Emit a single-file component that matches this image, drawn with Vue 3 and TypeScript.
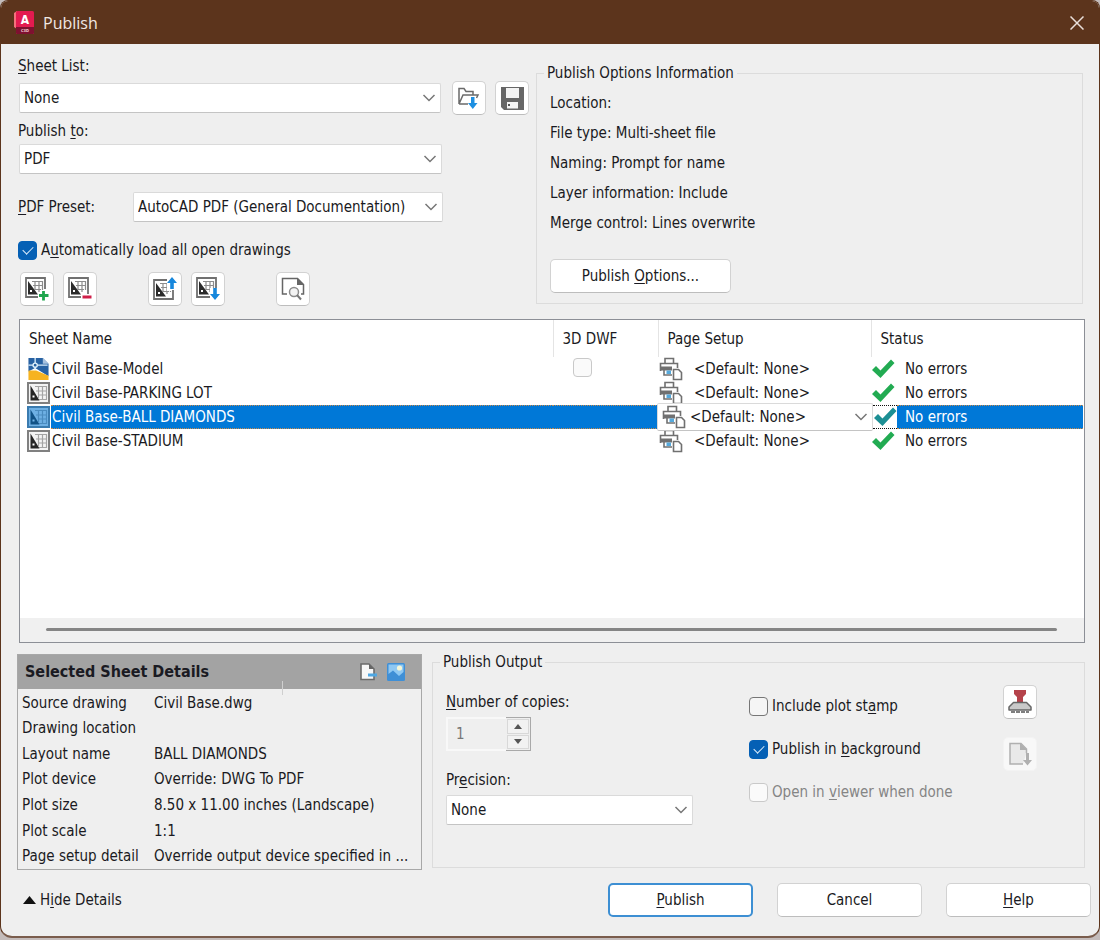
<script setup lang="ts">
import { ref } from 'vue'

interface Sheet {
  name: string
  kind: 'model' | 'layout'
}

interface Detail {
  label: string
  value: string
}

const sheets: Sheet[] = [
  { name: 'Civil Base-Model', kind: 'model' },
  { name: 'Civil Base-PARKING LOT', kind: 'layout' },
  { name: 'Civil Base-BALL DIAMONDS', kind: 'layout' },
  { name: 'Civil Base-STADIUM', kind: 'layout' },
]

const details: Detail[] = [
  { label: 'Source drawing', value: 'Civil Base.dwg' },
  { label: 'Drawing location', value: '' },
  { label: 'Layout name', value: 'BALL DIAMONDS' },
  { label: 'Plot device', value: 'Override: DWG To PDF' },
  { label: 'Plot size', value: '8.50 x 11.00 inches (Landscape)' },
  { label: 'Plot scale', value: '1:1' },
  { label: 'Page setup detail', value: 'Override output device specified in ...' },
]

const options: string[] = [
  'Location:',
  'File type: Multi-sheet file',
  'Naming: Prompt for name',
  'Layer information: Include',
  'Merge control: Lines overwrite',
]

const selected = ref(2)
const autoLoad = ref(true)
const plotStamp = ref(false)
const background = ref(true)
const copies = ref(1)
</script>

<template>
  <div class="desktop">
    <svg class="defs" aria-hidden="true">
      <symbol id="sheet" viewBox="0 0 23 22">
        <rect x="1" y="1" width="21" height="20" fill="#f4f4f4" stroke="#808080" stroke-width="2" />
        <path d="M8 4.500H19.500V17.500H12M9 9H19.500M11 13H19.500M11.500 4V16M15.500 4V18" fill="none" stroke="#a4a4a4" stroke-width="1.200" />
        <path d="M3.500 3.500V18.500H12.500Z" fill="#262626" />
        <rect x="5.500" y="13.500" width="2" height="2" fill="#fff" />
      </symbol>
      <symbol id="model" viewBox="0 0 21 23">
        <path d="M0 0H15L21 6V19L7 10.500L0 14Z" fill="#2862a3" />
        <path d="M15 0L21 6H15Z" fill="#a9c3df" />
        <path d="M0 13H8L21 18.500V23H0Z" fill="#f6b320" />
        <path d="M7 0V12M0 7.500H20" stroke="#d8ecfa" stroke-width="1.400" />
        <circle cx="7" cy="7.500" r="2.200" fill="#2862a3" stroke="#e4f3fc" stroke-width="1.400" />
      </symbol>
      <symbol id="printer" viewBox="0 0 24 24">
        <path d="M6 6V1.500H14.500V6" fill="#fff" stroke="#707070" stroke-width="1.600" />
        <path d="M1.500 14V6.500H18.500V11" fill="none" stroke="#707070" stroke-width="1.600" />
        <path d="M1 9.500H13V13.500H1Z" fill="#707070" />
        <path d="M5 13V18H13" fill="none" stroke="#707070" stroke-width="1.600" />
        <path d="M7.500 13.500H12V17H7.500Z" fill="#55a9dc" />
        <path d="M14.500 12.500H19.500L22.500 15.500V22.500H14.500Z" fill="#fff" stroke="#707070" stroke-width="1.600" />
      </symbol>
      <symbol id="chevron" viewBox="0 0 14 8">
        <path d="M1.500 1L7 6.500L12.500 1" fill="none" stroke="#777" stroke-width="1.500" />
      </symbol>
      <symbol id="mini" viewBox="0 0 22 22">
        <path d="M14 20H1V1H20V12" fill="none" stroke="#707070" stroke-width="1.800" />
        <path d="M7 4.500H17.500V13M8 8.500H17.500M10 12.500H16M10 4.500V13M14 4.500V15" fill="none" stroke="#8c8c8c" stroke-width="1.200" />
        <path d="M3 4V17.500H13Z" fill="#2b2b2b" />
        <rect x="5" y="13" width="2" height="2" fill="#fff" />
      </symbol>
    </svg>

    <main class="dialog">
      <header class="titlebar">
        <svg class="logo" viewBox="0 0 20 23" aria-hidden="true">
          <path d="M0 2L3 0V18L0 16Z" fill="#f3727d" />
          <rect x="2" y="0" width="18" height="23" rx="1.500" fill="#e31b50" />
          <path d="M2 16H20V21.500Q20 23 18.500 23H3.500Q2 23 2 21.500Z" fill="#7e1130" />
          <text x="11" y="13" text-anchor="middle" font-size="12" font-weight="700" fill="#fff">A</text>
          <text x="11" y="21" text-anchor="middle" font-size="4" font-weight="700" fill="#f4ccd6">C3D</text>
        </svg>
        <h1>Publish</h1>
        <button class="close" type="button" aria-label="Close">
          <svg viewBox="0 0 14 14"><path d="M.5.500L13.500 13.500M13.500.500L.5 13.500" stroke="#e9dfd9" stroke-width="1.500" /></svg>
        </button>
      </header>

      <div class="body">
        <section class="top">
          <div class="source">
            <label class="lbl" for="sheet-list"><u>S</u>heet List:</label>
            <div class="row first">
              <div class="combo grow">
                <select id="sheet-list"><option>None</option></select>
                <svg class="chev"><use href="#chevron" /></svg>
              </div>
              <button class="tool" type="button" aria-label="Load sheet list">
                <svg viewBox="0 0 24 24">
                  <path d="M2 18V2.500H7L9 5.500H16V8.500M2 18L6 9H21L19.500 12M2 18H11" fill="none" stroke="#6a6a6a" stroke-width="1.500" />
                  <path d="M14 11H17.500V17H20.500L15.800 23L11 17H14Z" fill="#1d8fe1" />
                </svg>
              </button>
              <button class="tool" type="button" aria-label="Save sheet list">
                <svg viewBox="0 0 24 24">
                  <path d="M1 1H24V24H4L1 21Z" fill="#666" />
                  <path d="M6 2H19V12H6ZM7 16H18V22.500H7Z" fill="#f3f3f3" />
                  <path d="M8 18H10V20H8Z" fill="#555" />
                </svg>
              </button>
            </div>
            <label class="lbl" for="publish-to">Publish <u>t</u>o:</label>
            <div class="row second">
              <div class="combo grow">
                <select id="publish-to"><option>PDF</option></select>
                <svg class="chev"><use href="#chevron" /></svg>
              </div>
            </div>
            <div class="row preset">
              <label for="preset"><u>P</u>DF Preset:</label>
              <div class="combo grow">
                <select id="preset"><option>AutoCAD PDF (General Documentation)</option></select>
                <svg class="chev"><use href="#chevron" /></svg>
              </div>
            </div>
            <label class="check"><input v-model="autoLoad" type="checkbox" /><span>A<u>u</u>tomatically load all open drawings</span></label>
            <div class="toolbar">
              <button class="tool" type="button" aria-label="Add sheets">
                <svg viewBox="0 0 24 24"><use href="#mini" width="22" height="22" /><path d="M18.500 13V24M13 18.500H24" stroke="#fff" stroke-width="5" /><path d="M18.500 14V23.500M14 18.500H23.500" stroke="#1fa64d" stroke-width="2.800" /></svg>
              </button>
              <button class="tool" type="button" aria-label="Remove sheets">
                <svg viewBox="0 0 24 24"><use href="#mini" width="22" height="22" /><path d="M13 20H24" stroke="#fff" stroke-width="5" /><path d="M20 12V17" stroke="#707070" stroke-width="1.800" /><path d="M14.500 20H23.500" stroke="#cf1e48" stroke-width="3" /></svg>
              </button>
              <button class="tool gap" type="button" aria-label="Move sheet up">
                <svg viewBox="0 0 24 24"><use href="#mini" y="2" width="22" height="22" /><path d="M14 0H24V14H14Z" fill="#fff" /><path d="M20 13V22H13" fill="none" stroke="#707070" stroke-width="1.800" /><path d="M19 0L24 6H20.800V12H17.200V6H14Z" fill="#1687dc" /></svg>
              </button>
              <button class="tool" type="button" aria-label="Move sheet down">
                <svg viewBox="0 0 24 24"><use href="#mini" width="22" height="22" /><path d="M14 11H24V24H14Z" fill="#fff" /><path d="M17.200 11H20.800V17H24L19 23L14 17H17.200Z" fill="#1687dc" /></svg>
              </button>
              <button class="tool gap" type="button" aria-label="Preview">
                <svg viewBox="0 0 24 24"><path d="M6 17H1.500V1.500H16.500L22.500 7.500V17H20" fill="none" stroke="#666" stroke-width="1.500" /><path d="M16 1V8H23Z" fill="#666" /><circle cx="13" cy="15" r="4.500" fill="#f3f3f3" stroke="#8b8b8b" stroke-width="1.500" /><path d="M16 18L20 22.500" stroke="#777" stroke-width="2" /></svg>
              </button>
            </div>
          </div>

          <fieldset class="info">
            <legend>Publish Options Information</legend>
            <p v-for="line in options" :key="line">{{ line }}</p>
            <button class="btn options" type="button">Publish <u>O</u>ptions...</button>
          </fieldset>
        </section>

        <section class="list">
          <table>
            <colgroup><col /><col class="c-dwf" /><col class="c-page" /><col class="c-status" /></colgroup>
            <thead>
              <tr><th>Sheet Name</th><th>3D DWF</th><th>Page Setup</th><th>Status</th></tr>
            </thead>
            <tbody>
              <tr v-for="(s, i) in sheets" :key="s.name" :class="{ sel: i === selected }" @click="selected = i">
                <td>
                  <div class="cell">
                    <svg class="kind"><use :href="s.kind === 'model' ? '#model' : '#sheet'" /></svg>
                    <span class="hl">{{ s.name }}</span>
                  </div>
                </td>
                <td class="dwf">
                  <div class="cell hl"><input v-if="s.kind === 'model'" type="checkbox" disabled aria-label="3D DWF" /></div>
                </td>
                <td class="page">
                  <div v-if="i === selected" class="combo inline">
                    <select aria-label="Page setup"><option>&lt;Default: None&gt;</option></select>
                    <svg class="printer"><use href="#printer" /></svg>
                    <svg class="chev"><use href="#chevron" /></svg>
                  </div>
                  <div v-else class="cell">
                    <svg class="printer"><use href="#printer" /></svg>
                    <span>&lt;Default: None&gt;</span>
                  </div>
                </td>
                <td class="status">
                  <div class="cell">
                    <span class="tick"><svg viewBox="0 0 23 20"><path d="M0 11L4 7L8.500 11.500L19 0.500L22.500 4L8.500 19Z" /></svg></span>
                    <span class="hl">No errors</span>
                  </div>
                </td>
              </tr>
            </tbody>
          </table>
          <div class="scroll"><div class="thumb"></div></div>
        </section>

        <section class="bottom">
          <div class="details">
            <header>
              <h2>Selected Sheet Details</h2>
              <svg viewBox="0 0 18 18"><path d="M2 1H10L15 6V16.500H2Z" fill="#f7f7f7" stroke="#6b6b6b" stroke-width="1.600" /><path d="M10 1V6H15Z" fill="#666" /><path d="M9 12H18" stroke="#4fa7e2" stroke-width="3" /></svg>
              <svg viewBox="0 0 18 18"><rect width="18" height="18" rx="1.500" fill="#3f8fd6" /><path d="M1.500 1.500H16.500V9L12 13L6 7.500L1.500 11Z" fill="#8fc8f2" /><circle cx="12.500" cy="5" r="2.600" fill="#f4f6d8" /></svg>
              <i class="grip"></i>
            </header>
            <dl>
              <div v-for="d in details" :key="d.label"><dt>{{ d.label }}</dt><dd>{{ d.value }}</dd></div>
            </dl>
          </div>

          <fieldset class="output">
            <legend>Publish Output</legend>
            <div class="left">
              <label for="copies"><u>N</u>umber of copies:</label>
              <div class="spin">
                <input id="copies" v-model="copies" type="text" disabled />
                <div class="arrows">
                  <button type="button" disabled aria-label="Increase"><svg viewBox="0 0 8 5"><path d="M0 5L4 0L8 5Z" /></svg></button>
                  <button type="button" disabled aria-label="Decrease"><svg viewBox="0 0 8 5"><path d="M0 0L4 5L8 0Z" /></svg></button>
                </div>
              </div>
              <label for="precision">Pr<u>e</u>cision:</label>
              <div class="combo">
                <select id="precision"><option>None</option></select>
                <svg class="chev"><use href="#chevron" /></svg>
              </div>
            </div>
            <div class="right">
              <div class="checks">
                <label class="check"><input v-model="plotStamp" type="checkbox" /><span>Include plot st<u>a</u>mp</span></label>
                <label class="check"><input v-model="background" type="checkbox" /><span>Publish in <u>b</u>ackground</span></label>
                <label class="check dim"><input type="checkbox" disabled /><span>Open in <u>v</u>iewer when done</span></label>
              </div>
              <div class="side">
                <button class="tool" type="button" aria-label="Plot stamp settings">
                  <svg viewBox="0 0 24 24"><path d="M6 0H18V4L15 7V12H9V7L6 4Z" fill="#b5434b" /><path d="M5.500 12.500H18.500L23 17V20H1V17Z" fill="#c9c9c9" stroke="#666" stroke-width="1.500" stroke-linejoin="round" /><path d="M3 22H21" stroke="#555" stroke-width="1.500" stroke-dasharray="4 1" /></svg>
                </button>
                <button class="tool off" type="button" disabled aria-label="View published file">
                  <svg viewBox="0 0 24 24"><path d="M15 22H2V1.500H13L18.500 7V11" fill="#e9e9e9" stroke="#b0b0b0" stroke-width="1.500" /><path d="M12 1V8H19Z" fill="#b0b0b0" /><path d="M18 11H21V18H24L19.500 23.500L15 18H18Z" fill="#b0b0b0" /></svg>
                </button>
              </div>
            </div>
          </fieldset>
        </section>

        <footer>
          <button class="hide" type="button"><svg viewBox="0 0 13 8"><path d="M0 8L6.500 0L13 8Z" fill="#111" /></svg><span>H<u>i</u>de Details</span></button>
          <button class="btn primary" type="button"><u>P</u>ublish</button>
          <button class="btn" type="button">Cancel</button>
          <button class="btn" type="button"><u>H</u>elp</button>
        </footer>
      </div>
    </main>
  </div>
</template>

<style>
body {
  background: #c4bcbb;
}
</style>

<style scoped>
* {
  box-sizing: border-box;
}
.desktop {
  font-family: "DejaVu Sans Condensed", "Noto Sans", sans-serif;
  font-size: 15px;
  line-height: 20px;
  color: #1a1a22;
  min-height: 100vh;
  padding-bottom: 2px;
  display: flex;
}
.defs {
  position: absolute;
  width: 0;
  height: 0;
}
button,
select,
input {
  font: inherit;
  color: inherit;
  margin: 0;
}
u {
  text-underline-offset: 2px;
}
.dialog {
  flex: 1;
  min-width: 0;
  display: flex;
  flex-direction: column;
  background: #efefef;
  border: 1px solid #5c341c;
  border-bottom: 2px solid #7a5c4c;
  border-radius: 8px 8px 12px 12px;
  overflow: hidden;
}
.titlebar {
  height: 43px;
  display: flex;
  align-items: center;
  gap: 9px;
  padding: 0 15px 0 13px;
  background: #5c341c;
  color: #f1e8e3;
}
.logo {
  width: 20px;
  height: 23px;
}
h1 {
  flex: 1;
  margin: 0;
  font-family: "Open Sans", "Noto Sans", sans-serif;
  font-size: 16px;
  font-weight: 400;
}
.close {
  border: 0;
  padding: 0;
  background: none;
  display: flex;
}
.close svg {
  width: 14px;
  height: 14px;
}
.body {
  flex: 1;
  display: flex;
  flex-direction: column;
  padding: 12px 14px 19px 17px;
}
.top {
  display: flex;
  gap: 7px;
}
.source {
  width: 511px;
  display: flex;
  flex-direction: column;
}
.lbl {
  align-self: flex-start;
}
.row {
  display: flex;
  align-items: center;
}
.row.first {
  gap: 9px;
  height: 34px;
  margin: 5px 0 6px;
  padding-left: 1px;
}
.row.first .combo {
  margin-right: 2px;
}
.row.second {
  margin-top: 3px;
  padding: 0 87px 0 1px;
}
.row.preset {
  margin-top: 18px;
  padding-right: 86px;
}
.preset label {
  width: 115px;
}
.grow {
  flex: 1;
}
.combo {
  position: relative;
  height: 30px;
  display: flex;
}
.combo select {
  appearance: none;
  width: 100%;
  background: #fff;
  border: 1px solid #dadada;
  border-bottom-color: #c4c4c4;
  border-radius: 2px;
  padding: 0 26px 0 4px;
}
.chev {
  position: absolute;
  right: 5px;
  top: 11px;
  width: 14px;
  height: 8px;
  pointer-events: none;
}
.tool {
  width: 34px;
  height: 34px;
  padding: 0;
  flex: none;
  display: grid;
  place-items: center;
  background: #fff;
  border: 1px solid #d2d2d2;
  border-bottom-color: #bdbdbd;
  border-radius: 5px;
}
.tool svg {
  width: 24px;
  height: 24px;
}
.tool.off {
  background: #f8f8f8;
  border-color: #f3f3f3;
}
.check {
  display: flex;
  align-items: center;
  gap: 4px;
}
input[type="checkbox"] {
  appearance: none;
  width: 19px;
  height: 19px;
  flex: none;
  display: grid;
  place-items: center;
  background: #f5f5f5;
  border: 1px solid #767676;
  border-radius: 4px;
}
input[type="checkbox"]:disabled {
  border-color: #c9c9c9;
  background: #fafafa;
}
input[type="checkbox"]:checked {
  background: #0560b5;
  border-color: #0560b5;
}
input[type="checkbox"]:checked::before {
  content: "";
  width: 9px;
  height: 5px;
  border-left: 1px solid #d8ebfa;
  border-bottom: 1px solid #d8ebfa;
  transform: translateY(-1px) rotate(-45deg);
}
.source > .check {
  align-self: flex-start;
  margin-top: 18px;
}
.toolbar {
  display: flex;
  gap: 9px;
  padding-left: 2px;
  margin-top: 12px;
}
.toolbar .gap {
  margin-left: 42px;
}
fieldset {
  margin: 0;
  border: 1px solid #dcdcdc;
  min-width: 0;
}
legend {
  padding: 0 3px;
}
.info {
  flex: 1;
  margin: 7px 2px 2px 0;
  padding: 10px 13px;
}
.info legend {
  margin-left: -6px;
}
.info p {
  margin: 0 0 10px;
}
.btn {
  height: 34px;
  width: 145px;
  padding: 0;
  background: #fff;
  border: 1px solid #d2d2d2;
  border-bottom-color: #bdbdbd;
  border-radius: 5px;
}
.options {
  width: 181px;
  margin-top: 16px;
}
.list {
  flex: 1;
  margin: 13px 0 0 1px;
  display: flex;
  flex-direction: column;
  background: #fff;
  border: 1px solid #8c8f96;
}
table {
  width: 100%;
  table-layout: fixed;
  border-collapse: collapse;
}
.c-dwf {
  width: 105px;
}
.c-page,
.c-status {
  width: 213px;
}
th {
  height: 37px;
  padding: 0 9px;
  text-align: left;
  font-weight: 400;
  border-right: 1px solid #e4e4e4;
}
th:last-child {
  border-right: 0;
}
td {
  height: 24px;
  padding: 0;
}
.cell {
  display: flex;
  align-items: center;
  height: 24px;
}
.hl {
  flex: 1;
  height: 24px;
  line-height: 24px;
}
td:first-child .cell {
  padding-left: 7px;
}
td:first-child .hl {
  padding-left: 1px;
}
.kind {
  width: 23px;
  height: 22px;
  margin-right: 1px;
}
.dwf input {
  margin: 0 0 3px 20px;
}
.printer {
  width: 24px;
  height: 24px;
  flex: none;
}
.page .cell .printer {
  margin: 0 11px 0 1px;
}
.tick {
  width: 24px;
  height: 24px;
  display: grid;
  place-items: center;
  fill: #22ab52;
}
.tick svg {
  width: 23px;
  height: 20px;
}
.status .hl {
  padding-left: 10px;
}
.sel .hl {
  line-height: 22px;
  background: #0078d7;
  color: #fff;
  border-top: 1px dotted #c98b4a;
  border-bottom: 1px dotted #c98b4a;
}
.sel .kind {
  background: #0078d7;
}
.sel .kind use {
  opacity: 0.45;
}
.sel .tick {
  fill: #1c8f94;
  border-top: 1px dotted #111;
  border-bottom: 1px dotted #111;
}
.sel .status .cell {
  padding: 0 1px 0 2px;
}
.sel .status .hl {
  padding-left: 8px;
}
.combo.inline {
  height: 28px;
  margin: -2px -2px -2px -1px;
}
.combo.inline select {
  padding-left: 32px;
}
.combo.inline .printer {
  position: absolute;
  left: 5px;
  top: 2px;
  pointer-events: none;
}
.combo.inline .chev {
  top: 10px;
}
.scroll {
  margin-top: auto;
  height: 24px;
  padding: 10px 27px 0 26px;
  background: #f0f0f0;
}
.thumb {
  height: 3px;
  border-radius: 2px;
  background: #858585;
}
.bottom {
  display: flex;
  gap: 10px;
  margin-top: 11px;
}
.details {
  width: 405px;
  height: 216px;
  margin-left: -1px;
  display: flex;
  flex-direction: column;
  border: 1px solid #a8a8a8;
}
.details header {
  position: relative;
  height: 34px;
  display: flex;
  align-items: center;
  gap: 10px;
  padding: 0 16px 0 7px;
  background: #a3a3a3;
}
.details header svg {
  width: 18px;
  height: 18px;
}
.grip {
  position: absolute;
  right: 138px;
  bottom: -6px;
  width: 1px;
  height: 14px;
  background: #cfcfcf;
}
h2 {
  flex: 1;
  margin: 0;
  font-size: 16px;
  font-weight: 700;
}
dl {
  flex: 1;
  margin: 0;
  padding: 1px 6px 0 4px;
  display: grid;
  grid-auto-rows: 1fr;
}
dl div {
  display: grid;
  grid-template-columns: 132px 1fr;
  align-items: center;
}
dt,
dd {
  margin: 0;
  white-space: nowrap;
}
.output {
  flex: 1;
  padding: 20px 47px 10px 13px;
  margin: -2px 0 2px;
  display: flex;
  justify-content: space-between;
}
.output legend {
  margin-left: -6px;
}
.left {
  width: 247px;
}
.left label {
  display: block;
}
.output .left .combo {
  margin-top: 5px;
}
.spin {
  display: flex;
  width: 85px;
  height: 34px;
  margin: 5px 0 19px;
}
.spin input {
  flex: 1;
  min-width: 0;
  border: 2px solid #f8f8f8;
  border-right: 0;
  background: #efefef;
  color: #777;
  padding: 0 8px;
}
.arrows {
  width: 25px;
  display: grid;
  gap: 1px;
  padding: 1px;
  border: 1px solid #a9a9a9;
  border-left: 0;
}
.arrows button {
  padding: 0;
  border: 1px solid #d8d8d8;
  background: #f2f2f2;
  display: grid;
  place-items: center;
}
.arrows svg {
  width: 8px;
  height: 5px;
  fill: #555;
}
.right {
  width: 288px;
  display: flex;
  justify-content: space-between;
}
.checks {
  display: flex;
  flex-direction: column;
  gap: 23px;
  padding-top: 4px;
}
.side {
  display: flex;
  flex-direction: column;
  gap: 18px;
  margin-top: -7px;
}
.dim {
  color: #858585;
}
footer {
  display: flex;
  align-items: center;
  gap: 24px;
  margin: 13px -6px 0 0;
}
.hide {
  margin-right: auto;
  display: flex;
  align-items: center;
  gap: 4px;
  padding: 0 0 0 5px;
  border: 0;
  background: none;
}
.hide svg {
  width: 13px;
  height: 8px;
}
.primary {
  border: 2px solid #3d8fd3;
}
</style>
